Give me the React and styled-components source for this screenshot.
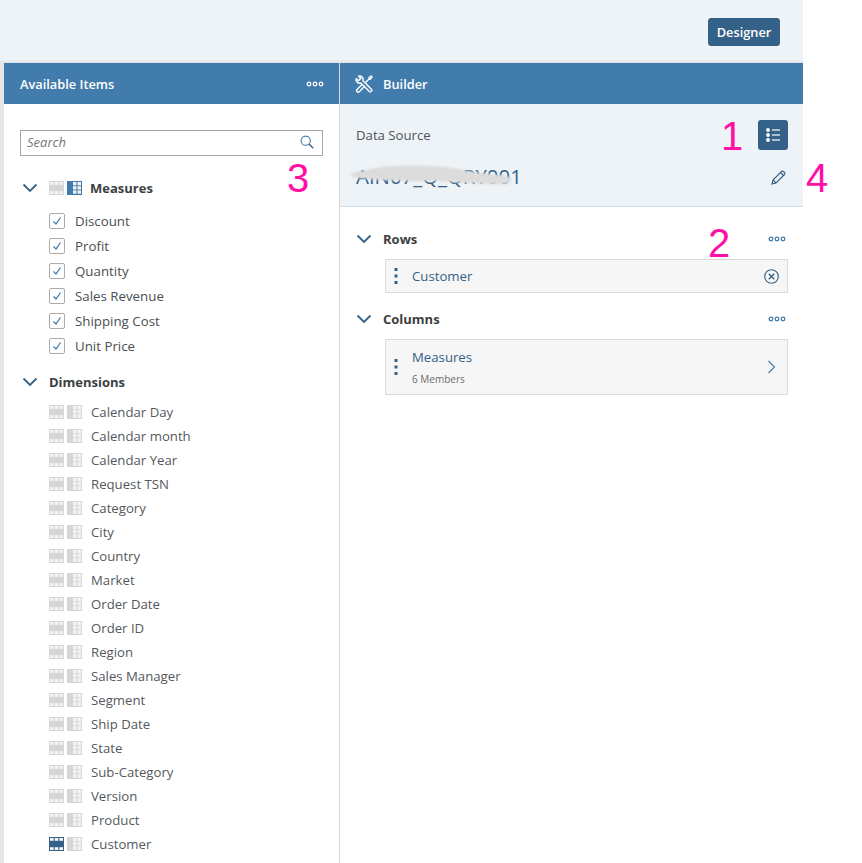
import React from "react";
import styled, { createGlobalStyle } from "styled-components";

const GlobalStyle = createGlobalStyle`
  html, body {
    margin: 0;
    padding: 0;
    background: #fff;
  }
  body {
    font-family: "Open Sans", "Noto Sans", sans-serif;
    color: #32363a;
  }
`;

const Page = styled.div`
  position: relative;
  width: 862px;
  height: 863px;
  overflow: hidden;
  background: #fff;
`;

const Shell = styled.div`
  width: 803px;
  height: 863px;
  display: flex;
  flex-direction: column;
`;

const TopBar = styled.header`
  height: 63px;
  flex: none;
  box-sizing: border-box;
  background: #eef3f8;
  box-shadow: inset 0 -4px 4px -4px rgba(0, 0, 0, 0.14);
  display: flex;
  justify-content: flex-end;
  align-items: flex-start;
  padding: 18px 23px 0 0;
`;

const DesignerButton = styled.button`
  width: 72px;
  height: 28px;
  padding: 0;
  border: 1px solid #2f5f8b;
  border-radius: 3px;
  background: #346187;
  color: #fff;
  font: 600 12.8px "Open Sans", sans-serif;
`;

const Columns = styled.div`
  flex: 1;
  display: grid;
  grid-template-columns: 336px 463px;
  padding-left: 4px;
  background: #e6e6e6;
  min-height: 0;
`;

const Panel = styled.section`
  background: #fff;
  min-width: 0;
  ${(p) => p.$divider && "border-right: 1px solid #d9d9d9;"}
`;

const PanelHeader = styled.div`
  height: 41px;
  box-sizing: border-box;
  background: #427cac;
  color: #fff;
  display: flex;
  align-items: center;
  justify-content: space-between;
  font-size: 12.8px;
  font-weight: 600;
  padding: 0 15px 0 16px;
`;

const HeaderTitle = styled.div`
  display: flex;
  align-items: center;
  gap: 10px;
  margin-left: -1px;
`;

const ItemsBody = styled.div`
  padding: 26px 16px 0;
`;

const SearchBox = styled.div`
  width: 303px;
  height: 26px;
  box-sizing: border-box;
  border: 1px solid #a6a6a6;
  display: flex;
  align-items: center;
  justify-content: space-between;
  padding: 0 8px 2px 6px;
  font-size: 13px;
  font-style: italic;
  color: #74777a;
  background: #fff;
`;

const GroupHeading = styled.div`
  display: flex;
  align-items: center;
  height: 24px;
  font-size: 13px;
  font-weight: 700;
  color: #3b3f42;
  margin-top: ${(p) => p.$top}px;
`;

const GroupName = styled.span`
  margin-left: ${(p) => p.$left || 0}px;
`;

const Chevron = styled.svg`
  width: 16px;
  height: 10px;
  flex: none;
  margin-left: ${(p) => p.$left}px;
  margin-right: 11px;
`;

const MeasureList = styled.ul`
  list-style: none;
  margin: 8px 0 0 29px;
  padding: 0;
`;

const MeasureRow = styled.li`
  height: 25px;
  display: flex;
  align-items: center;
  gap: 10px;
  font-size: 13.3px;
  color: #4a4e52;
`;

const CheckBox = styled.span`
  width: 16px;
  height: 16px;
  box-sizing: border-box;
  border: 1.5px solid #ababab;
  border-radius: 2px;
  display: flex;
  align-items: center;
  justify-content: center;
  background: #fff;
`;

const DimensionList = styled.ul`
  list-style: none;
  margin: 6px 0 0 29px;
  padding: 0;
`;

const DimensionRow = styled.li`
  height: 24px;
  display: flex;
  align-items: center;
  gap: 9px;
  font-size: 13.2px;
  color: #55595d;
`;

const GlyphPair = styled.span`
  display: flex;
  gap: 3px;
  flex: none;
`;

const SourceBox = styled.div`
  height: 103px;
  box-sizing: border-box;
  background: #eef3f8;
  border-bottom: 1px solid #cfdfee;
  padding: 16px 15px 0 16px;
`;

const SourceTop = styled.div`
  height: 30px;
  display: flex;
  align-items: center;
  justify-content: space-between;
  font-size: 13.2px;
  color: #4f5357;
`;

const SourceToggle = styled.div`
  width: 30px;
  height: 30px;
  border-radius: 3px;
  background: #346187;
  display: flex;
  align-items: center;
  justify-content: center;
`;

const SourceName = styled.div`
  position: relative;
  height: 30px;
  margin-top: 12px;
  padding-right: 2px;
  display: flex;
  align-items: center;
  justify-content: space-between;
  font-size: 20.4px;
  color: #346187;
`;

const SourceText = styled.span`
  margin-top: -2px;
`;

// the grey scribble that hides the source name in the screenshot
const Smear = styled.svg`
  position: absolute;
  left: -5px;
  top: 1px;
  filter: blur(0.8px);
`;

const Builder = styled.div`
  padding: 20px 15px 0 16px;
`;

const ShelfHeading = styled.div`
  height: 24px;
  display: flex;
  align-items: center;
  justify-content: space-between;
  padding-right: 2px;
  font-size: 13px;
  font-weight: 700;
  color: #3b3f42;
  margin-top: ${(p) => p.$top || 0}px;
`;

const ShelfLabel = styled.div`
  display: flex;
  align-items: center;
`;

const ShelfItem = styled.div`
  height: ${(p) => p.$height}px;
  box-sizing: border-box;
  margin: 8px 0 0 29px;
  border: 1px solid #d9d9d9;
  border-radius: 1px;
  background: #f6f6f6;
  display: flex;
  align-items: center;
  padding: 0 8px;
`;

const Grip = styled.svg`
  width: 4px;
  height: 16px;
  flex: none;
  margin-right: 14px;
`;

const ItemText = styled.div`
  flex: 1;
  min-width: 0;
`;

const ItemName = styled.div`
  font-size: 13.2px;
  color: #346187;
`;

const ItemNote = styled.div`
  font-size: 10px;
  color: #6a6d70;
  margin-top: 6px;
`;

const ChevronRight = styled.svg`
  width: 9px;
  height: 14px;
  margin-right: 3px;
`;

const Note = styled.span`
  position: absolute;
  left: ${(p) => p.$x}px;
  top: ${(p) => p.$y}px;
  font: 400 40px/1 "Liberation Sans", sans-serif;
  color: #ff0fa5;
`;

const ChevronDown = ({ left = 2 }) => (
  <Chevron $left={left} viewBox="0 0 16 10" fill="none" stroke="#346187" strokeWidth="1.8">
    <path d="M1.5 1.5 8 8l6.5-6.5" />
  </Chevron>
);

const Dots = ({ color }) => (
  <svg width="18" height="6" viewBox="0 0 18 6" fill="none" stroke={color} strokeWidth="1.3">
    <circle cx="3" cy="3" r="1.8" />
    <circle cx="9" cy="3" r="1.8" />
    <circle cx="15" cy="3" r="1.8" />
  </svg>
);

const GripDots = () => (
  <Grip viewBox="0 0 4 16" fill="#346187">
    <rect x="0.5" y="0" width="3" height="3" />
    <rect x="0.5" y="6.5" width="3" height="3" />
    <rect x="0.5" y="13" width="3" height="3" />
  </Grip>
);

// little table glyph, "on" gets the dark blue fill
const RowsGlyph = ({ on }) => {
  const fill = on ? "#346187" : "#d6d6d6";
  return (
    <svg width="15" height="14" viewBox="0 0 15 14">
      <rect width="15" height="14" fill={fill} />
      {[0, 1, 2].map((i) => (
        <React.Fragment key={i}>
          <rect x={1 + i * 4.7} y="1" width="3.6" height="2.8" fill="#f4f4f4" />
          <rect x={1 + i * 4.7} y="10.2" width="3.6" height="2.8" fill="#f4f4f4" />
        </React.Fragment>
      ))}
    </svg>
  );
};

const ColsGlyph = ({ on }) => {
  const fill = on ? "#427cac" : "#d6d6d6";
  return (
    <svg width="15" height="14" viewBox="0 0 15 14">
      <rect width="15" height="14" fill={fill} />
      {[0, 1, 2].map((i) => (
        <React.Fragment key={i}>
          <rect x="6" y={1 + i * 4.2} width="3.5" height="3.3" fill="#f4f4f4" />
          <rect x="10.5" y={1 + i * 4.2} width="3.5" height="3.3" fill="#f4f4f4" />
        </React.Fragment>
      ))}
    </svg>
  );
};

const measures = ["Discount", "Profit", "Quantity", "Sales Revenue", "Shipping Cost", "Unit Price"];

const dimensions = [
  "Calendar Day",
  "Calendar month",
  "Calendar Year",
  "Request TSN",
  "Category",
  "City",
  "Country",
  "Market",
  "Order Date",
  "Order ID",
  "Region",
  "Sales Manager",
  "Segment",
  "Ship Date",
  "State",
  "Sub-Category",
  "Version",
  "Product",
  "Customer",
];

const App = () => {
  return (
    <Page>
      <GlobalStyle />
      <Shell>
        <TopBar>
          <DesignerButton>Designer</DesignerButton>
        </TopBar>
        <Columns>
          <Panel $divider>
            <PanelHeader>
              <span>Available Items</span>
              <Dots color="#fff" />
            </PanelHeader>
            <ItemsBody>
              <SearchBox>
                <span>Search</span>
                <svg width="14" height="14" viewBox="0 0 14 14" fill="none" stroke="#427cac" strokeWidth="1.1">
                  <circle cx="5.7" cy="5.7" r="4.6" />
                  <path d="m9 9 4.2 4.2" stroke="#346187" strokeWidth="1.4" />
                </svg>
              </SearchBox>
              <GroupHeading $top={20}>
                <ChevronDown />
                <GlyphPair>
                  <RowsGlyph />
                  <ColsGlyph on />
                </GlyphPair>
                <GroupName $left={8}>Measures</GroupName>
              </GroupHeading>
              <MeasureList>
                {measures.map((name) => (
                  <MeasureRow key={name}>
                    <CheckBox>
                      <svg width="10" height="10" viewBox="0 0 10 10" fill="none" stroke="#427cac" strokeWidth="1.3">
                        <path d="m1.5 5.5 2.5 2.5 4.5-6.5" />
                      </svg>
                    </CheckBox>
                    <span>{name}</span>
                  </MeasureRow>
                ))}
              </MeasureList>
              <GroupHeading $top={12}>
                <ChevronDown />
                <GroupName>Dimensions</GroupName>
              </GroupHeading>
              <DimensionList>
                {dimensions.map((name) => (
                  <DimensionRow key={name}>
                    <GlyphPair>
                      <RowsGlyph on={name === "Customer"} />
                      <ColsGlyph />
                    </GlyphPair>
                    <span>{name}</span>
                  </DimensionRow>
                ))}
              </DimensionList>
            </ItemsBody>
          </Panel>
          <Panel>
            <PanelHeader>
              <HeaderTitle>
                <svg width="18" height="18" viewBox="0 0 18 18" fill="none" stroke="#fff" strokeWidth="1.4" strokeLinejoin="round">
                  <path d="M1.2 3.6 3.5 5.800 5.800 3.500 3.600 1.200A3.600 3.600 0 0 1 8 5.800L16.600 14.400A1.600 1.600 0 0 1 14.400 16.600L5.800 8A3.600 3.600 0 0 1 1.200 3.600Z" />
                  <path d="M14 2.500 16 1l1 1-1.500 2-1.500.3Z" />
                  <path d="M13.800 4.200 10.500 7.500" />
                  <path d="M7 9.500 1.800 14.700A1.600 1.600 0 0 0 4 16.900L9.200 11.700" />
                </svg>
                <span>Builder</span>
              </HeaderTitle>
            </PanelHeader>
            <SourceBox>
              <SourceTop>
                <span>Data Source</span>
                <SourceToggle>
                  <svg width="14" height="14" viewBox="0 0 14 14" fill="#fff">
                    <circle cx="2" cy="2" r="1.9" />
                    <circle cx="2" cy="7" r="1.9" />
                    <circle cx="2" cy="12" r="1.9" />
                    <rect x="6" y="1.4" width="8" height="1.2" />
                    <rect x="6" y="6.4" width="8" height="1.2" />
                    <rect x="6" y="11.4" width="8" height="1.2" />
                  </svg>
                </SourceToggle>
              </SourceTop>
              <SourceName>
                <SourceText>AIN07_Q_QRY001</SourceText>
                <Smear width="162" height="24" viewBox="0 0 162 24">
                  <path
                    d="M1 10C10 8 20 6 30 4 50 2 75 2 95 4 110 6 130 11 150 12 158 13 161 15 160 18 158 22 150 22 135 21 115 20 100 19 88 18 70 18 50 18 30 17 18 16 5 15 2 14 0 13 0 11 1 10Z"
                    fill="#dcdcdc"
                  />
                </Smear>
                <svg width="15" height="15" viewBox="0 0 15 15" fill="none" stroke="#346187" strokeWidth="1.1">
                  <path d="M1 14l1-4L10.500 1.500a1.400 1.400 0 0 1 2 0l1 1a1.400 1.400 0 0 1 0 2L5 13z" />
                  <path d="m2 10 3 3M9.500 2.500l3 3" />
                </svg>
              </SourceName>
            </SourceBox>
            <Builder>
              <ShelfHeading>
                <ShelfLabel>
                  <ChevronDown left={0} />
                  Rows
                </ShelfLabel>
                <Dots color="#427cac" />
              </ShelfHeading>
              <ShelfItem $height={34}>
                <GripDots />
                <ItemText>
                  <ItemName>Customer</ItemName>
                </ItemText>
                <svg width="15" height="15" viewBox="0 0 15 15" fill="none" stroke="#346187" strokeWidth="1.1">
                  <circle cx="7.500" cy="7.500" r="6.800" />
                  <path d="m4.800 4.800 5.400 5.400m0-5.400-5.400 5.400" strokeWidth="1.300" />
                </svg>
              </ShelfItem>
              <ShelfHeading $top={14}>
                <ShelfLabel>
                  <ChevronDown left={0} />
                  Columns
                </ShelfLabel>
                <Dots color="#427cac" />
              </ShelfHeading>
              <ShelfItem $height={56}>
                <GripDots />
                <ItemText>
                  <ItemName>Measures</ItemName>
                  <ItemNote>6 Members</ItemNote>
                </ItemText>
                <ChevronRight viewBox="0 0 9 14" fill="none" stroke="#427cac" strokeWidth="1.1">
                  <path d="m1.500 1 6 6-6 6" />
                </ChevronRight>
              </ShelfItem>
            </Builder>
          </Panel>
        </Columns>
      </Shell>
      <Note $x={721} $y={116}>1</Note>
      <Note $x={708} $y={223}>2</Note>
      <Note $x={287} $y={158}>3</Note>
      <Note $x={806} $y={158}>4</Note>
    </Page>
  );
};

export default App;
